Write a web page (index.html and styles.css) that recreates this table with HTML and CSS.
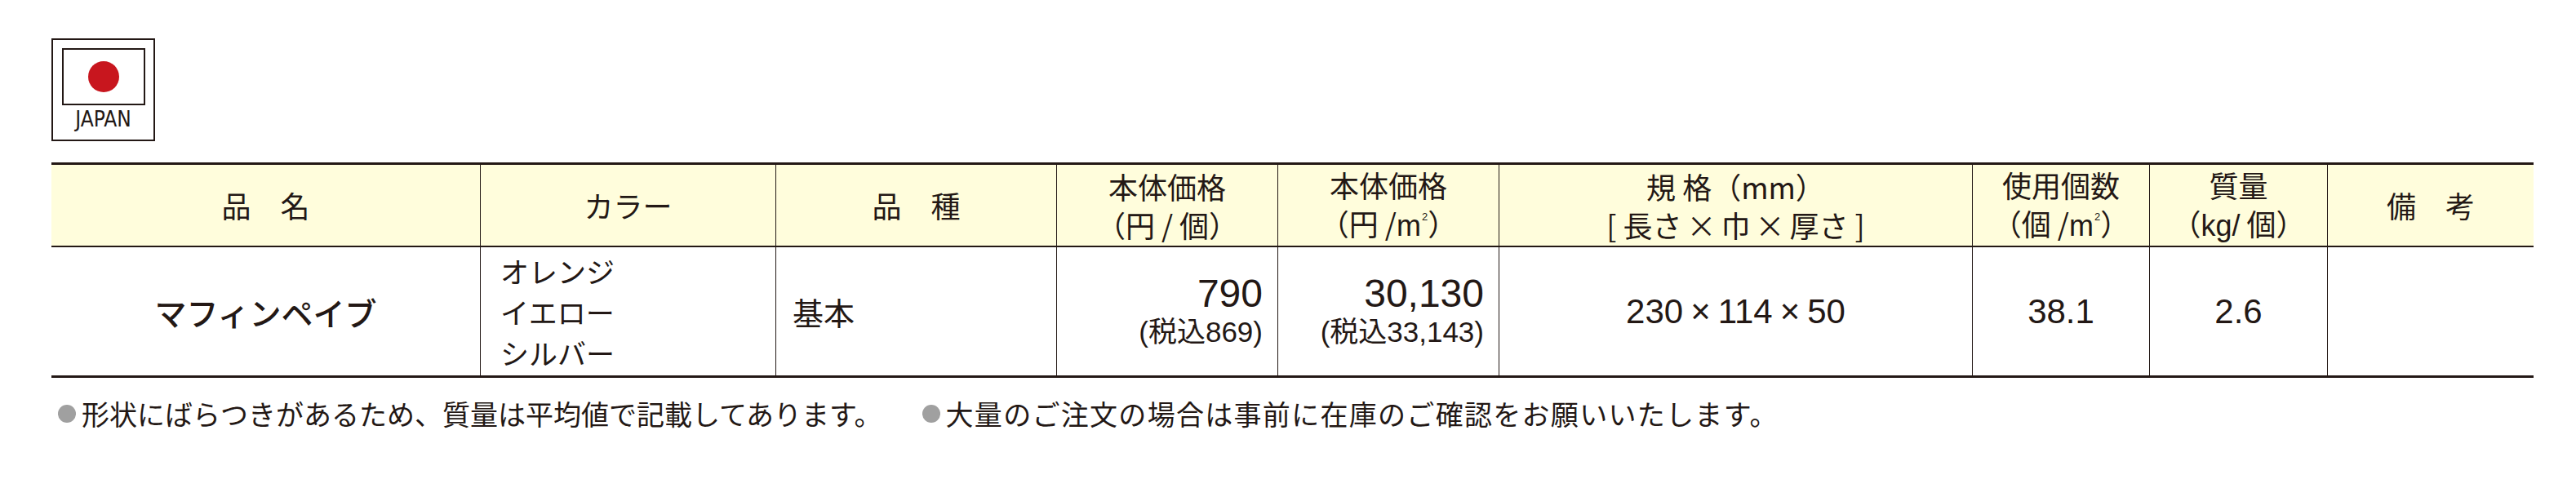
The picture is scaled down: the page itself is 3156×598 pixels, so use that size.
FILE: index.html
```html
<!DOCTYPE html>
<html lang="ja">
<head>
<meta charset="utf-8">
<title>マフィンペイブ</title>
<link rel="stylesheet" href="styles.css">
</head>
<body>
<div class="page">
  <div class="badge">
    <div class="flag"><div class="sun"></div></div>
    <div class="badge-label">JAPAN</div>
  </div>

  <div class="spec">
    <div class="th">品　名</div>
    <div class="th">カラー</div>
    <div class="th">品　種</div>
    <div class="th"><div>本体価格<br>（円 / 個）</div></div>
    <div class="th"><div>本体価格<br>（円 /<span class="unit">m<span class="sup">2</span></span>）</div></div>
    <div class="th"><div>規 格（mm）<br>[ 長さ<span class="times-h">×</span>巾<span class="times-h">×</span>厚さ ]</div></div>
    <div class="th"><div>使用個数<br>（個 /<span class="unit">m<span class="sup">2</span></span>）</div></div>
    <div class="th"><div>質量<br>（<span class="lat">kg/</span> 個）</div></div>
    <div class="th">備　考</div>

    <div class="td td-name">マフィンペイブ</div>
    <div class="td td-colors"><div>オレンジ<br>イエロー<br>シルバー</div></div>
    <div class="td td-kind">基本</div>
    <div class="td td-price"><div><div class="price">790</div><div class="tax">(税込869)</div></div></div>
    <div class="td td-price"><div><div class="price">30,130</div><div class="tax">(税込33,143)</div></div></div>
    <div class="td td-num">230<span class="times">×</span>114<span class="times">×</span>50</div>
    <div class="td td-num">38.1</div>
    <div class="td td-num">2.6</div>
    <div class="td"></div>
  </div>

  <div class="notes">
    <div class="note"><span class="dot"></span>形状にばらつきがあるため、質量は平均値で記載してあります。</div>
    <div class="note note-wide"><span class="dot"></span>大量のご注文の場合は事前に在庫のご確認をお願いいたします。</div>
  </div>
</div>
</body>
</html>
```

FILE: styles.css
```css
html, body {
  margin: 0;
  padding: 0;
  background: #ffffff;
}

body {
  color: #231815;
  font-family: "Liberation Sans", "Noto Sans CJK JP", sans-serif;
}

.page {
  padding: 47px 0 0 63px;
}

/* JAPAN badge */
.badge {
  width: 127px;
  height: 126px;
  box-sizing: border-box;
  border: 2px solid #231815;
  display: flex;
  flex-direction: column;
  align-items: center;
  padding-top: 10px;
}

.flag {
  width: 102px;
  height: 70px;
  box-sizing: border-box;
  border: 2px solid #231815;
  display: flex;
  align-items: center;
  justify-content: center;
  background: #ffffff;
}

.sun {
  width: 38px;
  height: 38px;
  border-radius: 50%;
  background: #c8161e;
}

.badge-label {
  font-family: "DejaVu Sans Condensed", "DejaVu Sans", sans-serif;
  font-stretch: condensed;
  font-size: 26px;
  line-height: 34px;
  color: #231815;
}

/* spec table */
.spec {
  display: grid;
  grid-template-columns: 525px 362px 344px 271px 271px 580px 217px 218px 253px;
  width: 3041px;
  margin-top: 26px;
  border-top: 3px solid #231815;
  border-bottom: 3px solid #231815;
}

.th {
  height: 101px;
  box-sizing: border-box;
  background: #fffddc;
  border-bottom: 2px solid #231815;
  display: flex;
  align-items: center;
  justify-content: center;
  text-align: center;
  font-family: "Noto Sans CJK JP", sans-serif;
  font-size: 36px;
  line-height: 47px;
}

.th + .th,
.td + .td {
  border-left: 1px solid #231815;
}

.unit {
  font-family: "Liberation Sans", sans-serif;
}

.sup {
  font-size: 13px;
  vertical-align: 19px;
  line-height: 0;
  margin-left: 1px;
}

.lat {
  font-family: "Liberation Sans", sans-serif;
}

.times-h {
  margin: 0 6px;
}

.td {
  height: 157px;
  box-sizing: border-box;
  display: flex;
  align-items: center;
}

.td-name {
  justify-content: center;
  font-family: "Noto Sans CJK JP", sans-serif;
  font-weight: 500;
  font-size: 39px;
}

.td-colors {
  padding-left: 24px;
  font-family: "Noto Sans CJK JP", sans-serif;
  font-size: 35px;
  line-height: 50px;
}

.td-kind {
  padding-left: 20px;
  font-family: "Noto Sans CJK JP", sans-serif;
  font-size: 38px;
}

.td-price {
  justify-content: flex-end;
  padding-right: 18px;
  text-align: right;
}

.price {
  font-size: 48px;
  line-height: 50px;
}

.tax {
  font-size: 35px;
  line-height: 44px;
}

.td-num {
  justify-content: center;
  font-size: 42px;
}

.times {
  margin: 0 9px;
}

/* notes */
.notes {
  display: flex;
  margin-top: 22px;
  padding-left: 8px;
  font-family: "Noto Sans CJK JP", sans-serif;
  font-size: 34px;
  line-height: 44px;
}

.note {
  display: flex;
  align-items: center;
}

.note + .note {
  margin-left: 49px;
}

.note-wide {
  letter-spacing: 1.3px;
}

.dot {
  width: 22px;
  height: 22px;
  border-radius: 50%;
  background: #a0a0a0;
  margin-right: 7px;
  flex: none;
}
```
